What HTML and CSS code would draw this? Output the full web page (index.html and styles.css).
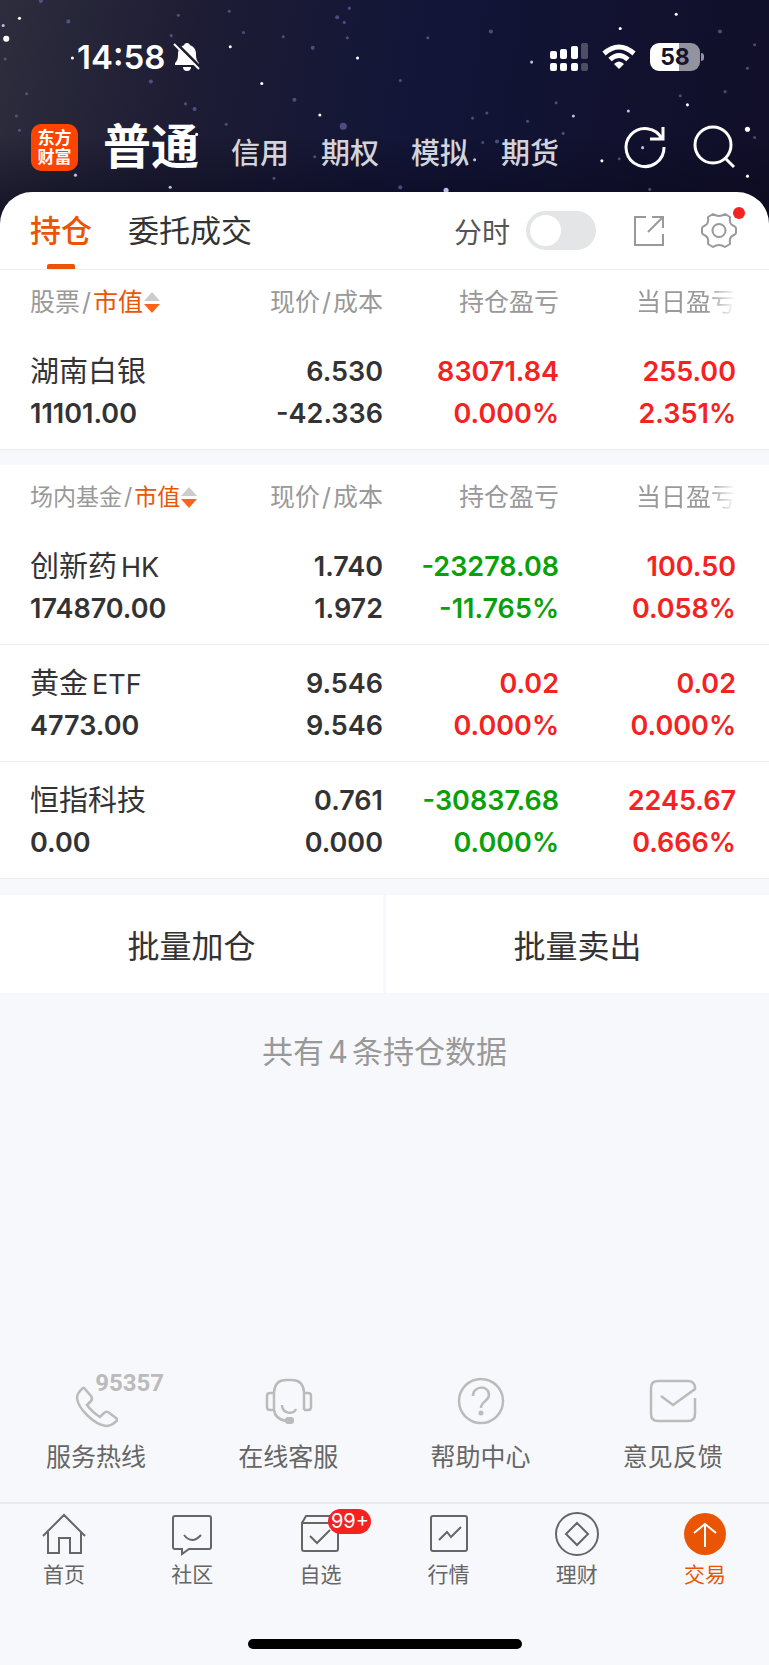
FILE: index.html
```html
<!DOCTYPE html>
<html lang="zh-CN">
<head>
    <meta charset="UTF-8">
    <meta name="viewport" content="width=device-width, initial-scale=1">
    <title>持仓</title>
    <link rel="stylesheet" href="styles.css">
</head>
<body>
    <header class="top">
        <svg class="stars" viewBox="0 0 769 220" preserveAspectRatio="xMidYMin slice" aria-hidden="true">
            <g fill="#fff">
                <circle cx="13" cy="38" r="3"/><circle cx="26" cy="18" r="1.5"/><circle cx="233" cy="46" r="1.5"/>
                <circle cx="264" cy="82" r="1.5"/><circle cx="321" cy="113" r="1.5"/><circle cx="358" cy="57" r="1.5"/>
                <circle cx="3" cy="135" r="1.5"/><circle cx="78" cy="57" r="1.5"/><circle cx="200" cy="132" r="1.5"/>
                <circle cx="671" cy="14" r="1.5"/><circle cx="616" cy="28" r="1.5"/><circle cx="682" cy="103" r="1.5"/>
                <circle cx="741" cy="127" r="2.5"/><circle cx="598" cy="158" r="1.5"/><circle cx="741" cy="173" r="1.5"/>
            </g>
            <g fill="#b9c0ee">
                <circle cx="445" cy="187" r="2.5"/><circle cx="529" cy="61" r="1.5"/><circle cx="570" cy="114" r="1.5"/>
                <circle cx="624" cy="109" r="1.5"/><circle cx="473" cy="157" r="1.5"/><circle cx="174" cy="184" r="1.5"/>
                <circle cx="81" cy="172" r="1.5"/><circle cx="638" cy="145" r="1.5"/><circle cx="10" cy="25" r="1.5"/>
            </g>
            <g fill="#6f66a8" opacity=".65">
                <circle cx="344" cy="124" r="3.5"/><circle cx="198" cy="107" r="2"/><circle cx="189" cy="102" r="1.5"/>
                <circle cx="155" cy="80" r="2"/><circle cx="74" cy="21" r="2"/><circle cx="47" cy="1" r="2"/>
                <circle cx="33" cy="92" r="1.5"/><circle cx="23" cy="114" r="1.5"/><circle cx="26" cy="128" r="1.5"/>
                <circle cx="1" cy="110" r="1.5"/><circle cx="1" cy="22" r="1.5"/><circle cx="12" cy="58" r="1.5"/>
                <circle cx="175" cy="35" r="1.5"/><circle cx="182" cy="15" r="1.5"/><circle cx="246" cy="32" r="1.5"/>
                <circle cx="232" cy="11" r="1.5"/><circle cx="285" cy="36" r="1.5"/><circle cx="314" cy="47" r="2"/>
                <circle cx="296" cy="98" r="2"/><circle cx="229" cy="122" r="1.5"/><circle cx="338" cy="17" r="2"/>
                <circle cx="345" cy="22" r="1.5"/><circle cx="348" cy="37" r="1.5"/><circle cx="350" cy="8" r="1.5"/>
                <circle cx="427" cy="37" r="1.5"/><circle cx="489" cy="31" r="2"/><circle cx="400" cy="79" r="1.5"/>
                <circle cx="471" cy="116" r="1.5"/><circle cx="485" cy="111" r="1.5"/><circle cx="525" cy="119" r="1.5"/>
                <circle cx="553" cy="101" r="1.5"/><circle cx="560" cy="131" r="1.5"/><circle cx="495" cy="139" r="2"/>
                <circle cx="481" cy="140" r="1.5"/><circle cx="714" cy="31" r="2"/><circle cx="748" cy="44" r="1.5"/>
                <circle cx="741" cy="67" r="1.5"/><circle cx="719" cy="90" r="1.5"/><circle cx="675" cy="94" r="1.5"/>
                <circle cx="748" cy="135" r="1.5"/><circle cx="615" cy="156" r="1.5"/><circle cx="645" cy="186" r="1.5"/>
                <circle cx="400" cy="184" r="2"/><circle cx="316" cy="154" r="1.5"/><circle cx="276" cy="175" r="1.5"/>
            </g>
        </svg>

        <div class="status">
            <span class="clock">14:58</span>
            <svg width="28" height="30" viewBox="0 0 28 30">
                <path fill="#fff" d="M14 1c1.800 0 2.500 1 3 2.200 4 1.300 6 4.500 6 8.800 0 5 1 7 3 9v2H2v-2c2-2 3-4 3-9 0-4.300 2-7.500 6-8.800C11.500 2 12.200 1 14 1zM10 25h8c0 2.500-1.500 4-4 4s-4-1.500-4-4z"/>
                <path stroke="#1e1e33" stroke-width="3" d="M3 1 27 25"/>
                <path stroke="#fff" stroke-width="2" d="M1 2 26 27"/>
            </svg>
            <div class="status-right">
                <svg width="38" height="28" viewBox="0 0 38 28" fill="#fff">
                    <rect x="0" y="8" width="7" height="8" rx="2"/><rect x="0" y="20" width="7" height="8" rx="2"/>
                    <rect x="10" y="6" width="7" height="10" rx="2"/><rect x="10" y="20" width="7" height="8" rx="2"/>
                    <rect x="21" y="3" width="7" height="13" rx="2"/><rect x="21" y="20" width="7" height="8" rx="2"/>
                    <g opacity=".25"><rect x="31" y="0" width="7" height="16" rx="2"/><rect x="31" y="20" width="7" height="8" rx="2"/></g>
                </svg>
                <svg width="34" height="26" viewBox="0 0 34 26" fill="none" stroke="#fff" stroke-width="5">
                    <path d="M2 9.500Q17-3.500 32 9.500"/>
                    <path d="M8 15.500Q17 7.500 26 15.500"/>
                    <path fill="#fff" stroke="none" d="M17 25 12 20Q17 15 22 20z"/>
                </svg>
                <span class="battery">58</span>
            </div>
        </div>

        <nav class="accounts">
            <a href="#" class="logo">东方<br>财富</a>
            <div class="account-links">
                <a href="#" class="current">普通</a>
                <a href="#">信用</a>
                <a href="#">期权</a>
                <a href="#">模拟</a>
                <a href="#">期货</a>
            </div>
            <div class="account-tools">
                <button type="button" aria-label="刷新">
                    <svg width="42" height="42" viewBox="0 0 42 42" fill="none" stroke="#fff" stroke-width="3"><path d="M40 21A19 19 0 1 1 38 13M39 1v12H26"/></svg>
                </button>
                <button type="button" aria-label="搜索">
                    <svg width="42" height="42" viewBox="0 0 42 42" fill="none" stroke="#fff" stroke-width="3"><circle cx="20" cy="19" r="18"/><path d="M32 32 41 41"/></svg>
                </button>
            </div>
        </nav>
    </header>

    <main class="panel">
        <div class="tabs">
            <a href="#" class="tab active">持仓</a>
            <a href="#" class="tab">委托成交</a>
            <div class="tab-tools">
                <label for="fenshi">分时</label>
                <input type="checkbox" id="fenshi" class="switch">
                <button type="button" class="share" aria-label="分享">
                    <svg width="30" height="30" viewBox="0 0 30 30" fill="none" stroke="#999" stroke-width="2"><path d="M12 1H1v28h28V18M18 1h11v11M14 16 29 1"/></svg>
                </button>
                <button type="button" class="setting" aria-label="设置">
                    <svg width="36" height="36" viewBox="0 0 36 36" fill="none" stroke="#999" stroke-width="2" stroke-linejoin="round"><path d="M12 1Q18 5 24 1L29 4Q28 11 32 12.500Q35 14 35 15V20Q35 21 32 22.500Q28 24 29 31L24 34Q18 30 12 34L7 31Q8 24 4 22.500Q1 21 1 20V15Q1 14 4 12.500Q8 11 7 4z"/><circle cx="18" cy="17.500" r="6.500"/></svg>
                    <i class="dot"></i>
                </button>
            </div>
        </div>

        <table class="holdings">
            <thead>
                <tr>
                    <th class="name">股票<i class="slash">/</i><button type="button" class="sort">市值<svg width="16" height="22" viewBox="0 0 16 22"><path fill="#ccc" d="M0 10 8 1 16 10z"/><path fill="#fe6418" d="M0 13h16L8 22z"/></svg></button></th>
                    <th class="price">现价<i class="slash">/</i>成本</th>
                    <th class="profit">持仓盈亏</th>
                    <th class="today"><span class="fade">当日盈亏</span></th>
                </tr>
            </thead>
            <tbody>
                <tr>
                    <td class="name"><span>湖南白银</span><b>11101.00</b></td>
                    <td><b>6.530</b><b>-42.336</b></td>
                    <td class="up"><b>83071.84</b><b>0.000%</b></td>
                    <td class="up"><b>255.00</b><b>2.351%</b></td>
                </tr>
            </tbody>
        </table>

        <table class="holdings">
            <thead>
                <tr>
                    <th class="name small">场内基金<i class="slash">/</i><button type="button" class="sort">市值<svg width="16" height="22" viewBox="0 0 16 22"><path fill="#ccc" d="M0 10 8 1 16 10z"/><path fill="#fe6418" d="M0 13h16L8 22z"/></svg></button></th>
                    <th class="price">现价<i class="slash">/</i>成本</th>
                    <th class="profit">持仓盈亏</th>
                    <th class="today"><span class="fade">当日盈亏</span></th>
                </tr>
            </thead>
            <tbody>
                <tr>
                    <td class="name"><span>创新药<i class="latin">HK</i></span><b>174870.00</b></td>
                    <td><b>1.740</b><b>1.972</b></td>
                    <td class="down"><b>-23278.08</b><b>-11.765%</b></td>
                    <td class="up"><b>100.50</b><b>0.058%</b></td>
                </tr>
                <tr>
                    <td class="name"><span>黄金<i class="latin">ETF</i></span><b>4773.00</b></td>
                    <td><b>9.546</b><b>9.546</b></td>
                    <td class="up"><b>0.02</b><b>0.000%</b></td>
                    <td class="up"><b>0.02</b><b>0.000%</b></td>
                </tr>
                <tr>
                    <td class="name"><span>恒指科技</span><b>0.00</b></td>
                    <td><b>0.761</b><b>0.000</b></td>
                    <td class="down"><b>-30837.68</b><b>0.000%</b></td>
                    <td class="up"><b>2245.67</b><b>0.666%</b></td>
                </tr>
            </tbody>
        </table>

        <div class="batch">
            <button type="button">批量加仓</button>
            <button type="button">批量卖出</button>
        </div>
        <p class="total">共有<span>4</span>条持仓数据</p>
    </main>

    <section class="services">
        <a href="#">
            <span class="service-icon">
                <svg width="48" height="48" viewBox="0 0 48 48"><path d="M11 10Q5 15 5 20C6 31 23 47 34 48Q39 48 44 43.500Q46 42 44 40L36 34Q34 33 32 35L28 39Q20 34 15 27L19 23Q21 21 19 18L13 11Q12 9 11 10z"/></svg>
                <b class="hotline">95357</b>
            </span>
            服务热线
        </a>
        <a href="#">
            <span class="service-icon">
                <svg width="48" height="48" viewBox="0 0 48 48"><path d="M10 32V14Q11 2 22 2H28Q39 2 40 14V32M10 15H6Q3 15 3 18V29Q3 32 6 32H10Q11 41 22 43M40 15H44Q47 15 47 18V29Q47 32 44 32H40M18 27C18 36 30 37 32 31"/><rect class="solid" x="21" y="39" width="9" height="7" rx="3"/></svg>
            </span>
            在线客服
        </a>
        <a href="#">
            <span class="service-icon">
                <svg width="48" height="48" viewBox="0 0 48 48"><circle cx="24" cy="23" r="22"/><path d="M16 18C16 7 32 7 32 17C32 23 24 23 24 30"/><circle class="solid" cx="24" cy="35" r="2.500"/></svg>
            </span>
            帮助中心
        </a>
        <a href="#">
            <span class="service-icon">
                <svg width="48" height="48" viewBox="0 0 48 48"><path d="M46 20V36Q46 43 39 43H9Q2 43 2 36V10Q2 3 9 3H39Q45 3 46 9V11L24 27 12 18"/></svg>
            </span>
            意见反馈
        </a>
    </section>

    <nav class="tabbar">
        <a href="#">
            <svg width="44" height="44" viewBox="0 0 44 44"><path d="M1 24 22 3 43 24M6 20V41H17V26H28V41H39V20"/></svg>
            首页
        </a>
        <a href="#">
            <svg width="44" height="44" viewBox="0 0 44 44"><path d="M5 4H39Q41 4 41 6V35Q41 37 39 37H19L12 42V37H5Q3 37 3 35V6Q3 4 5 4zM14 23Q22 33 31 23"/></svg>
            社区
        </a>
        <a href="#">
            <svg width="44" height="44" viewBox="0 0 44 44"><path d="M4 11 8 4H36L40 11M4 11H40V37Q40 39 38 39H6Q4 39 4 37zM12 24 19 31 32 18"/></svg>
            自选
            <span class="badge">99+</span>
        </a>
        <a href="#">
            <svg width="44" height="44" viewBox="0 0 44 44"><rect x="4" y="4" width="36" height="35" rx="2"/><path d="M12 28 20 20 24 25 34 15"/></svg>
            行情
        </a>
        <a href="#">
            <svg width="44" height="44" viewBox="0 0 44 44"><circle cx="22" cy="22" r="21"/><path d="M22 11 33 22 22 33 11 22z"/></svg>
            理财
        </a>
        <a href="#" class="on">
            <svg width="44" height="44" viewBox="0 0 44 44"><circle cx="22" cy="22" r="21" fill="#ea5504" stroke="none"/><path stroke="#fff" d="M22 35V12M11 21 22 12 33 21"/></svg>
            交易
        </a>
    </nav>
    <div class="home-bar"></div>
</body>
</html>
```

FILE: styles.css
```css
*{
    box-sizing: border-box;
}
body{
    margin: 0;
    min-height: 100vh;
    display: flex;
    flex-direction: column;
    background-color: #f7f8fb;
    color: #333;
    font-family: Inter, "Noto Sans CJK SC", sans-serif;
}
a{
    color: inherit;
    text-decoration: none;
}
button{
    border: 0;
    padding: 0;
    background: none;
    color: inherit;
    font: inherit;
}
svg{
    display: block;
    flex-shrink: 0;
    overflow: visible;
}

/* cabecera */
.top{
    position: relative;
    padding-bottom: 44px;
    margin-bottom: -32px;
    color: #fff;
    background: linear-gradient(to bottom, rgba(10, 10, 30, 0) 60%, rgba(8, 8, 26, 0.7)), linear-gradient(100deg, #2d2d3d 0%, #1d1c34 25%, #121538 55%, #110f28 100%);
}
.stars{
    position: absolute;
    top: 0;
    left: 0;
    width: 100%;
    height: 100%;
    overflow: hidden;
}
.status{
    position: relative;
    display: flex;
    align-items: center;
    gap: 8px;
    height: 114px;
    padding: 0 69px 0 77px;
}
.clock{
    font-size: 33px;
    font-weight: 600;
}
.status-right{
    display: flex;
    align-items: center;
    gap: 14px;
    margin-left: auto;
}
.battery{
    position: relative;
    width: 50px;
    height: 28px;
    border-radius: 9px;
    background: linear-gradient(to right, #fff 58%, #93929f 58%);
    color: #14142c;
    font-size: 23px;
    font-weight: 700;
    line-height: 28px;
    text-align: center;
}
.battery::after{
    content: "";
    position: absolute;
    right: -4px;
    top: 10px;
    width: 3px;
    height: 8px;
    border-radius: 0 3px 3px 0;
    background-color: #93929f;
}
.accounts{
    position: relative;
    display: flex;
    align-items: center;
    height: 66px;
    padding: 0 34px 0 31px;
}
.logo{
    width: 47px;
    height: 47px;
    margin-right: 25px;
    padding-top: 5px;
    border-radius: 10px;
    background-color: #ff4400;
    font-size: 17px;
    font-weight: 700;
    line-height: 19px;
    text-align: center;
}
.account-links{
    display: flex;
    align-items: baseline;
    gap: 32px;
    padding-top: 7px;
    color: #d3d3da;
    font-size: 29px;
    font-weight: 500;
    line-height: 66px;
}
.account-links .current{
    color: #fff;
    font-size: 48px;
    font-weight: 700;
}
.account-tools{
    display: flex;
    gap: 27px;
    margin-left: auto;
}

/* pestañas */
.panel{
    position: relative;
}
.tabs{
    display: flex;
    align-items: center;
    gap: 36px;
    height: 78px;
    padding: 0 32px 0 30px;
    border-bottom: 1px solid #eee;
    border-radius: 32px 32px 0 0;
    background-color: #fff;
    font-size: 31px;
}
.tab{
    position: relative;
    line-height: 77px;
}
.active{
    color: #ea5504;
    font-weight: 500;
}
.active::after{
    content: "";
    position: absolute;
    bottom: 0;
    left: calc(50% - 14px);
    width: 28px;
    height: 5px;
    border-radius: 2px 2px 0 0;
    background-color: #ea5504;
}
.tab-tools{
    display: flex;
    align-items: center;
    margin-left: auto;
    color: #555;
    font-size: 28px;
}
.switch{
    appearance: none;
    width: 70px;
    height: 39px;
    margin: 0 38px 0 16px;
    padding: 4px;
    border-radius: 20px;
    background-color: #e4e5e7;
}
.switch::before{
    content: "";
    display: block;
    width: 31px;
    height: 31px;
    border-radius: 50%;
    background-color: #fff;
}
.switch:checked::before{
    margin-left: auto;
}
.setting{
    position: relative;
    margin-left: 37px;
}
.dot{
    position: absolute;
    top: -6px;
    right: -8px;
    width: 12px;
    height: 12px;
    border-radius: 50%;
    background-color: #f52222;
}

/* tablas */
.holdings{
    width: 100%;
    table-layout: fixed;
    border-collapse: separate;
    border-spacing: 0;
    background-color: #fff;
    margin-bottom: 15px;
}
.holdings th{
    height: 63px;
    padding: 0;
    color: #999;
    font-size: 25px;
    font-weight: 400;
    line-height: 32px;
    text-align: right;
    white-space: nowrap;
}
.holdings .small{
    font-size: 23px;
}
.price{
    width: 150px;
}
.profit{
    width: 176px;
}
.today{
    width: 210px;
}
.slash{
    margin: 0 2px;
    font-style: normal;
}
.sort{
    display: inline-flex;
    align-items: center;
    gap: 1px;
    color: #ea5504;
}
.fade{
    -webkit-mask-image: linear-gradient(to right, #000 72%, transparent);
    mask-image: linear-gradient(to right, #000 72%, transparent);
}
.holdings td{
    padding: 18px 0 14px;
    border-bottom: 1px solid #eee;
    font-size: 27px;
    line-height: 42px;
    text-align: right;
}
.holdings .name{
    padding-left: 30px;
    text-align: left;
}
.holdings th:last-child,
.holdings td:last-child{
    padding-right: 33px;
}
td span,
td b{
    display: block;
    font-weight: 600;
}
.name span{
    font-size: 29px;
    font-weight: 400;
}
.latin{
    margin-left: 4px;
    font-size: 27px;
    font-style: normal;
    line-height: 1;
}
.up{
    color: #f52222;
}
.down{
    color: #09a009;
}

.batch{
    display: grid;
    grid-template-columns: 1fr 1fr;
    gap: 3px;
    padding-top: 1px;
}
.batch button{
    height: 98px;
    background-color: #fff;
    font-size: 32px;
}
.total{
    margin: 38px 0;
    color: #999;
    font-size: 31px;
    line-height: 42px;
    text-align: center;
}
.total span{
    margin: 0 4px;
}

/* servicios */
.services{
    display: grid;
    grid-template-columns: repeat(4, 1fr);
    margin-top: auto;
    padding-bottom: 29px;
}
.services a{
    display: flex;
    flex-direction: column;
    align-items: center;
    gap: 15px;
    color: #666;
    font-size: 25px;
    line-height: 32px;
}
.service-icon{
    position: relative;
}
.service-icon svg{
    fill: none;
    stroke: #bbb;
    stroke-width: 2.5;
}
.service-icon .solid{
    fill: #bbb;
    stroke: none;
}
.hotline{
    position: absolute;
    top: -11px;
    left: 23px;
    color: #bbb;
    font-family: Roboto, sans-serif;
    font-size: 24px;
}

/* menu inferior */
.tabbar{
    display: grid;
    grid-template-columns: repeat(6, 1fr);
    padding-top: 8px;
    border-top: 2px solid #e9eaec;
}
.tabbar a{
    position: relative;
    display: flex;
    flex-direction: column;
    align-items: center;
    gap: 6px;
    color: #666;
    font-size: 21px;
    line-height: 26px;
}
.tabbar svg{
    fill: none;
    stroke: #666;
    stroke-width: 2;
}
.tabbar .on{
    color: #ea5504;
}
.badge{
    position: absolute;
    top: -3px;
    left: calc(50% + 8px);
    width: 43px;
    height: 25px;
    border-radius: 13px;
    background-color: #f52222;
    color: #fff;
    font-size: 20px;
    line-height: 25px;
    text-align: center;
}
.home-bar{
    width: 274px;
    height: 10px;
    margin: 51px auto 16px;
    border-radius: 5px;
    background-color: #000;
}
```
